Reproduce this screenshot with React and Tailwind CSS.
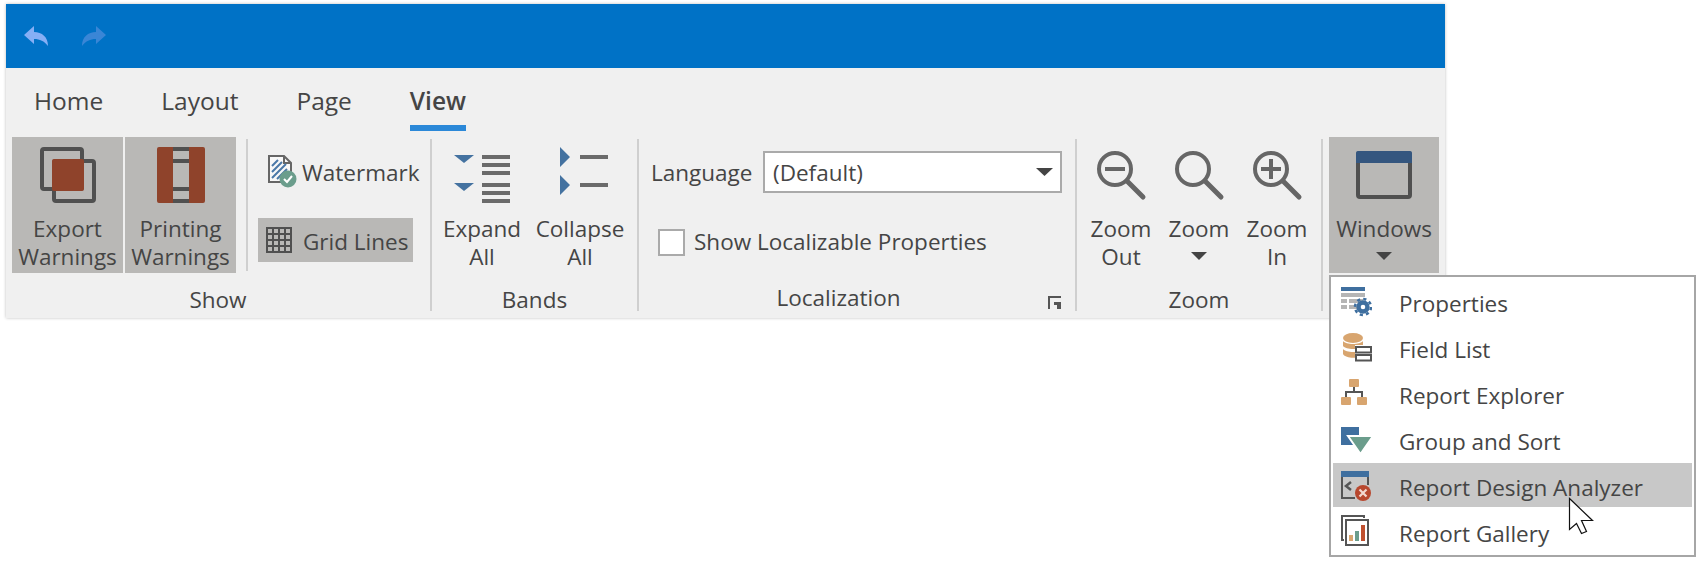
import React from 'react';

const Sep = ({ short }) => (
  <div className={`w-[2px] shrink-0 mt-[2px] bg-[#cfcfcf] ${short ? 'h-[132px]' : 'h-[172px]'}`} />
);

const Group = ({ label, width, children, launcher }) => (
  <div className="flex flex-col shrink-0" style={{ width }}>
    <div className="flex h-[136px]">{children}</div>
    <div className="flex items-center h-[50px] pt-[8px]">
      <div className="flex-1 text-center">{label}</div>
      {launcher}
    </div>
  </div>
);

const LargeButton = ({ icon, lines, active, width = 'w-[111px]', arrow }) => (
  <button className={`flex flex-col items-center shrink-0 h-[136px] pt-[6px] whitespace-nowrap ${width} ${active ? 'bg-[#b9b8b6]' : ''}`}>
    <div className="h-[72px] w-[64px]">{icon}</div>
    <span>{lines[0]}</span>
    {lines[1] && <span>{lines[1]}</span>}
    {arrow && (
      <svg width="16" height="8" viewBox="0 0 16 8" className="mt-[9px]">
        <path d="M0 0H16L8 8Z" fill="#444" />
      </svg>
    )}
  </button>
);

const ExportIcon = () => (
  <svg width="64" height="64" viewBox="0 0 64 64" fill="none">
    <rect x="6" y="6" width="40" height="40" rx="2" stroke="#505050" strokeWidth="4" />
    <rect x="18" y="18" width="40" height="40" rx="2" stroke="#505050" strokeWidth="4" />
    <rect x="16" y="16" width="32" height="32" rx="2" fill="#8f432b" />
  </svg>
);

const PrintingIcon = () => (
  <svg width="64" height="64" viewBox="0 0 64 64">
    <path d="M24 4H40V8H24ZM24 16H40V20H24ZM24 44H40V48H24ZM24 56H40V60H24Z" fill="#505050" />
    <path d="M10 4H24V60H10A2 2 0 0 1 8 58V6A2 2 0 0 1 10 4ZM40 4H54A2 2 0 0 1 56 6V58A2 2 0 0 1 54 60H40Z" fill="#8f432b" />
  </svg>
);

const WatermarkIcon = () => (
  <svg width="32" height="34" viewBox="0 0 32 34" fill="none" className="shrink-0">
    <path d="M3 1H18L25 8V27H3Z" fill="#f8f8f8" stroke="#666" strokeWidth="2" />
    <path d="M18 1V8H25" stroke="#666" strokeWidth="2" />
    <path d="M6 11L12 5M6 17L16 7M6 23L20 9M11 24L21 14" stroke="#4a78a8" strokeWidth="2" />
    <circle cx="22" cy="24" r="8.5" fill="#6b9d8c" />
    <path d="M18 24L21 27L26 21" stroke="#fff" strokeWidth="2" />
  </svg>
);

const GridIcon = () => {
  const cells = [2, 8, 14, 20];
  return (
    <svg width="26" height="26" viewBox="0 0 26 26" className="shrink-0">
      <rect width="26" height="26" fill="#505050" />
      {cells.map((y) => cells.map((x) => <rect key={`${x}-${y}`} x={x} y={y} width="4" height="4" fill="#b9b8b6" />))}
    </svg>
  );
};

const ExpandIcon = () => (
  <svg width="64" height="64" viewBox="0 0 64 64">
    <path d="M4 12H24L14 20ZM4 40H24L14 48Z" fill="#4472a0" />
    <path d="M32 12H60V16H32ZM32 20H60V24H32ZM32 28H60V32H32ZM32 40H60V44H32ZM32 48H60V52H32ZM32 56H60V60H32Z" fill="#6b6b6b" />
  </svg>
);

const CollapseIcon = () => (
  <svg width="64" height="64" viewBox="0 0 64 64">
    <path d="M12 4L22 14L12 24ZM12 32L22 42L12 52Z" fill="#4472a0" />
    <path d="M32 12H60V16H32ZM32 40H60V44H32Z" fill="#6b6b6b" />
  </svg>
);

const ZoomIcon = ({ sign }) => (
  <svg width="64" height="64" viewBox="0 0 64 64" fill="none" stroke="#666">
    <circle cx="26" cy="26" r="16" strokeWidth="4" />
    <path d="M38 38L54 54" strokeWidth="5" strokeLinecap="round" />
    {sign && <path d="M16 26H36" strokeWidth="4" />}
    {sign === 'plus' && <path d="M26 16V36" strokeWidth="4" />}
  </svg>
);

const WindowsIcon = () => (
  <svg width="64" height="64" viewBox="0 0 64 64" fill="none">
    <rect x="6" y="10" width="52" height="44" rx="2" stroke="#505050" strokeWidth="4" />
    <path d="M6 8H58A2 2 0 0 1 60 10V20H4V10A2 2 0 0 1 6 8Z" fill="#34567f" />
  </svg>
);

const PropertiesIcon = () => (
  <svg width="32" height="32" viewBox="0 0 32 32">
    <rect x="1" y="2" width="24" height="4" fill="#3f6f9f" />
    <rect x="1" y="8" width="24" height="4" fill="#b5b5b5" />
    <path d="M1 14H7V18H1ZM9 14H23V18H9ZM1 20H7V24H1ZM9 20H17V24H9Z" fill="#b5b5b5" />
    <circle cx="23" cy="22" r="8" fill="none" stroke="#3f6f9f" strokeWidth="2.5" strokeDasharray="3.2 3.08" />
    <circle cx="23" cy="22" r="4.5" fill="none" stroke="#3f6f9f" strokeWidth="4.4" />
  </svg>
);

const FieldListIcon = () => (
  <svg width="32" height="32" viewBox="0 0 32 32">
    <ellipse cx="13" cy="7" rx="10" ry="5" fill="#d8a56f" />
    <path d="M3 10C6 14 20 14 23 10V15C20 19 6 19 3 15Z" fill="#d8a56f" />
    <path d="M3 18C6 22 20 22 23 18V23C20 28 6 28 3 23Z" fill="#d8a56f" />
    <rect x="15" y="14" width="18" height="18" fill="#fff" />
    <rect x="16" y="16" width="15" height="5.5" fill="#fff" stroke="#555" strokeWidth="2" />
    <rect x="16" y="24" width="15" height="5.5" fill="#fff" stroke="#555" strokeWidth="2" />
  </svg>
);

const ExplorerIcon = () => (
  <svg width="32" height="32" viewBox="0 0 32 32">
    <path d="M13 10H15V14H23V20H21V16H7V20H5V14H13Z" fill="#555" />
    <rect x="9" y="2" width="10" height="8" rx="1" fill="#d8a56f" />
    <rect x="1" y="20" width="10" height="8" rx="1" fill="#d8a56f" />
    <rect x="17" y="20" width="10" height="8" rx="1" fill="#d8a56f" />
  </svg>
);

const GroupSortIcon = () => (
  <svg width="32" height="32" viewBox="0 0 32 32">
    <rect x="1" y="4" width="18" height="18" fill="#3f6f9f" />
    <path d="M8 13H33L20.5 31Z" fill="#6b9d8c" stroke="#fff" strokeWidth="2" />
  </svg>
);

const AnalyzerIcon = () => (
  <svg width="32" height="32" viewBox="0 0 32 32" fill="none">
    <rect x="1" y="2" width="28" height="6" fill="#3f6f9f" />
    <path d="M2 8V29H15M28 8V16" stroke="#555" strokeWidth="2" />
    <path d="M11 13L6 17L11 21" stroke="#555" strokeWidth="2.5" />
    <circle cx="23" cy="24" r="8" fill="#b8482f" />
    <path d="M19.5 20.5L26.5 27.5M26.5 20.5L19.5 27.5" stroke="#f2d8d0" strokeWidth="2.2" />
  </svg>
);

const GalleryIcon = () => (
  <svg width="32" height="32" viewBox="0 0 32 32" fill="none">
    <path d="M24 3V1H2V25H4" stroke="#555" strokeWidth="2" />
    <rect x="6" y="5" width="22" height="25" stroke="#555" strokeWidth="2" fill="#fff" />
    <rect x="9" y="20" width="4" height="6" fill="#d8a56f" />
    <rect x="15" y="16" width="4" height="10" fill="#6b9d8c" />
    <rect x="21" y="10" width="4" height="16" fill="#c0502f" />
  </svg>
);

const menuItems = [
  { label: 'Properties', icon: <PropertiesIcon /> },
  { label: 'Field List', icon: <FieldListIcon /> },
  { label: 'Report Explorer', icon: <ExplorerIcon /> },
  { label: 'Group and Sort', icon: <GroupSortIcon /> },
  { label: 'Report Design Analyzer', icon: <AnalyzerIcon />, active: true },
  { label: 'Report Gallery', icon: <GalleryIcon /> },
];

const WindowsMenu = () => (
  <div className="absolute left-[1323px] top-[271px] w-[367px] h-[282px] bg-white border-2 border-[#a6a6a6] p-[2px] flex flex-col gap-[2px]">
    {menuItems.map((item) => (
      <div key={item.label} className={`flex items-center h-[44px] shrink-0 pl-[7px] ${item.active ? 'bg-[#c8c8c8]' : ''}`}>
        <div className="w-[32px] h-[32px] shrink-0">{item.icon}</div>
        <span className="ml-[27px] pt-[5px]">{item.label}</span>
      </div>
    ))}
  </div>
);

const Cursor = () => (
  <svg width="26" height="38" viewBox="0 0 26 38" className="absolute left-[1568px] top-[497px]">
    <path d="M1.5 1.5V32.5L8.5 26.5L13.5 36.5L18.5 34.5L13.5 23.5H24.5Z" fill="#fff" stroke="#111" strokeWidth="1.2" />
  </svg>
);

export default function App() {
  return (
    <div className="bg-white min-h-screen pt-[4px] pl-[6px] font-['Open_Sans',sans-serif] text-[22.5px] leading-[28px] text-[#454545]">
      <div className="relative w-[1439px] bg-[#f0f0f0] shadow-[0_0_3px_#bdbdbd]">
        <div className="flex items-center h-[64px] bg-[#0072c6] pl-[18px] gap-[34px]">
          <svg width="24" height="20" viewBox="0 0 24 20">
            <path d="M0 9L10 0V6C18 6 24 11 24 20C20 15 16 13 10 13V18Z" fill="#86aff5" />
          </svg>
          <svg width="24" height="20" viewBox="0 0 24 20">
            <path d="M24 9L14 0V6C6 6 0 11 0 20C4 15 8 13 14 13V18Z" fill="#3a86d6" />
          </svg>
        </div>

        <div className="flex items-start gap-[58px] h-[69px] pt-[17px] pl-[28px] text-[24.5px] leading-[32px]">
          <span>Home</span>
          <span>Layout</span>
          <span>Page</span>
          <span className="font-semibold border-b-[6px] border-[#2b88d8] pb-[8px]">View</span>
        </div>

        <div className="flex h-[181px]">
          <Group label="Show" width="424px">
            <div className="flex gap-[2px] pl-[6px]">
              <LargeButton icon={<ExportIcon />} lines={['Export', 'Warnings']} active />
              <LargeButton icon={<PrintingIcon />} lines={['Printing', 'Warnings']} active />
            </div>
            <div className="ml-[10px]"><Sep short /></div>
            <div className="flex flex-col ml-[10px] pt-[17px]">
              <div className="flex items-center h-[36px] pl-[8px] gap-[4px] whitespace-nowrap">
                <WatermarkIcon />
                <span className="pt-[2px]">Watermark</span>
              </div>
              <div className="flex items-center mt-[28px] w-[155px] h-[44px] pl-[8px] gap-[11px] bg-[#b9b8b6] whitespace-nowrap">
                <GridIcon />
                <span className="pt-[4px]">Grid Lines</span>
              </div>
            </div>
          </Group>
          <Sep />
          <Group label="Bands" width="205px">
            <div className="flex pl-[5px] gap-[8px]">
              <LargeButton width="w-[90px]" icon={<ExpandIcon />} lines={['Expand', 'All']} />
              <LargeButton width="w-[90px]" icon={<CollapseIcon />} lines={['Collapse', 'All']} />
            </div>
          </Group>
          <Sep />
          <Group
            label="Localization"
            width="436px"
            launcher={
              <svg width="14" height="14" viewBox="0 0 14 14" fill="none" className="ml-[10px] mr-[13px] mt-[10px] shrink-0">
                <path d="M1 13V1H13" stroke="#555" strokeWidth="2" />
                <path d="M6 6H13V13H9V9H6Z" fill="#555" />
              </svg>
            }
          >
            <div className="flex flex-col pl-[12px] pt-[14px]">
              <div className="flex items-center">
                <span className="w-[112px] pt-[2px]">Language</span>
                <div className="flex items-center justify-between w-[299px] h-[42px] bg-white border-2 border-[#aaaaaa] pl-[8px] pr-[7px]">
                  <span className="pt-[1px]">(Default)</span>
                  <svg width="17" height="8" viewBox="0 0 17 8"><path d="M0 0H17L8.5 8Z" fill="#444" /></svg>
                </div>
              </div>
              <div className="flex items-center mt-[35px] pl-[7px]">
                <div className="w-[27px] h-[27px] bg-white border-2 border-[#aaaaaa]" />
                <span className="ml-[9px] whitespace-nowrap">Show Localizable Properties</span>
              </div>
            </div>
          </Group>
          <Sep />
          <Group label="Zoom" width="244px">
            <div className="flex pl-[5px]">
              <LargeButton width="w-[78px]" icon={<ZoomIcon sign="minus" />} lines={['Zoom', 'Out']} />
              <LargeButton width="w-[78px]" icon={<ZoomIcon />} lines={['Zoom']} arrow />
              <LargeButton width="w-[78px]" icon={<ZoomIcon sign="plus" />} lines={['Zoom', 'In']} />
            </div>
          </Group>
          <Sep />
          <div className="pl-[6px]">
            <LargeButton width="w-[110px]" icon={<WindowsIcon />} lines={['Windows']} active arrow />
          </div>
        </div>

        <WindowsMenu />
      </div>
      <Cursor />
    </div>
  );
}
